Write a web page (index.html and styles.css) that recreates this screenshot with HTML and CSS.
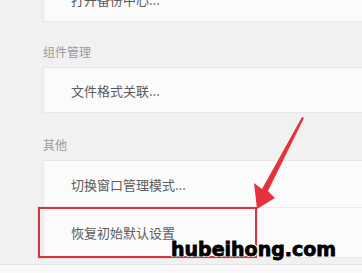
FILE: index.html
```html
<!DOCTYPE html>
<html lang="zh-CN">
<head>
<meta charset="utf-8">
<link rel="stylesheet" href="styles.css">
</head>
<body>
<div class="page">
  <div class="content">
    <div class="card card-top">
      <div class="row">打开备份中心...</div>
    </div>
    <div class="section-label">组件管理</div>
    <div class="card">
      <div class="row">文件格式关联...</div>
    </div>
    <div class="section-label section-label-tall">其他</div>
    <div class="card">
      <div class="row row-a">切换窗口管理模式...</div>
      <div class="row row-b">恢复初始默认设置</div>
    </div>
  </div>
  <div class="footer-strip"></div>

  <div class="highlight"></div>
  <svg class="arrow" width="362" height="273" viewBox="0 0 362 273">
    <polygon points="304,118 268,191 275,198 257,209 254,183 262,189 302,117" fill="#e5323c"/>
  </svg>
  <div class="watermark">hubeihong.com</div>
</div>
</body>
</html>
```

FILE: styles.css
```css
html, body {
  margin: 0;
  padding: 0;
}
body {
  background: #f1f1f1;
  font-family: "Noto Sans CJK SC", "Noto Sans", sans-serif;
  width: 362px;
  height: 273px;
  overflow: hidden;
}
.page {
  position: relative;
  width: 362px;
  height: 273px;
  overflow: hidden;
}
.content {
  padding-left: 43px;
  height: 264px;
  overflow: hidden;
}
.card {
  background: #fbfbfb;
  border: 1px solid #e8e8e8;
  border-right: none;
}
.card-top {
  margin-top: -24px;
}
.row {
  height: 44px;
  display: flex;
  align-items: center;
  padding-left: 27px;
  font-size: 13px;
  color: #5c5c5c;
}
.row-a {
  height: 46px;
  border-bottom: 1px solid #ebebeb;
}
.row-b {
  height: 49px;
}
.section-label {
  height: 45px;
  display: flex;
  align-items: flex-end;
  padding-bottom: 0;
  box-sizing: border-box;
  padding-bottom: 8px;
  font-size: 12px;
  line-height: 14px;
  color: #9a9a9a;
}
.section-label-tall {
  height: 47px;
}
.footer-strip {
  height: 9px;
  background: #f9f9f9;
  border-top: 1px solid #e6e6e6;
}
.highlight {
  position: absolute;
  left: 38px;
  top: 207px;
  width: 215px;
  height: 47px;
  border: 2px solid #d8353f;
  box-shadow: 0 0 1px rgba(216, 53, 63, 0.5);
}
.arrow {
  position: absolute;
  left: 0;
  top: 0;
}
.watermark {
  position: absolute;
  left: 171px;
  top: 236px;
  font-family: "DejaVu Sans", sans-serif;
  font-weight: bold;
  font-size: 19px;
  line-height: 26px;
  color: #000;
  -webkit-text-stroke: 0.8px #000;
  text-shadow: 1px 1px 0 #fff, -1px -1px 0 #fff, 1px -1px 0 #fff, -1px 1px 0 #fff;
}
```
